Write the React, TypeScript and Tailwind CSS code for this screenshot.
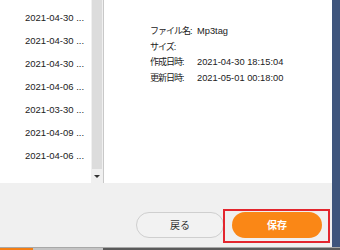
const dates = [
  '2021-04-30 ...',
  '2021-04-30 ...',
  '2021-04-30 ...',
  '2021-04-06 ...',
  '2021-03-30 ...',
  '2021-04-09 ...',
  '2021-04-06 ...',
]

const info: [string, string][] = [
  ['ファイル名:', 'Mp3tag'],
  ['サイズ:', ''],
  ['作成日時:', '2021-04-30 18:15:04'],
  ['更新日時:', '2021-05-01 00:18:00'],
]

const jp = { fontFamily: '"Liberation Sans", "Noto Sans CJK JP", sans-serif' }

export default function App() {
  return (
    <div className="flex h-[250px] w-[340px] flex-col overflow-hidden bg-[#3f557c]" style={jp}>
      <div className="flex h-[247px] w-[332px] flex-col bg-[#f0f0f0]">
        <div className="flex h-[183px]">
          <div className="w-[91px] bg-white pt-[7px]">
            {dates.map((d, i) => (
              <div key={i} className="flex h-[23px] items-center pl-[25px] text-[9.5px] text-[#222]">
                {d}
              </div>
            ))}
          </div>
          <div className="flex w-[12px] flex-col bg-[#f0f0f0]">
            <div className="mx-[1px] flex-1 bg-[#dcdcdc]" />
            <div className="flex h-[14px] items-center justify-center">
              <div className="h-0 w-0 border-x-[3px] border-t-[3px] border-x-transparent border-t-[#333]" />
            </div>
          </div>
          <div className="w-px bg-[#c8c8c8]" />
          <div className="flex-1 bg-white pl-[46px] pt-[24px]">
            {info.map(([k, v], i) => (
              <div key={i} className="flex h-[15.7px] items-center text-[#222]">
                <span className="w-[47px] text-[9px] tracking-[-1px]">{k}</span>
                <span className="text-[9.3px]">{v}</span>
              </div>
            ))}
          </div>
        </div>
        <div className="flex flex-1 items-end justify-end gap-[8px] pb-[9px] pr-[10px]">
          <button className="flex h-[26px] w-[88px] items-center justify-center rounded-full border border-[#cfcfcf] bg-[#f2f2f2] text-[10px] text-[#333]">
            戻る
          </button>
          <div className="relative">
            <button className="flex h-[26px] w-[90px] items-center justify-center rounded-full bg-[#fa8716] text-[10px] font-bold text-white">
              保存
            </button>
            <div className="absolute -left-[9px] -right-[8px] -top-[3px] -bottom-[5px] border-2 border-[#e3262e]" />
          </div>
        </div>
      </div>
      <div className="flex flex-1 flex-col">
        <div className="h-px bg-[#a8a8a8]" />
        <div className="flex flex-1">
          <div className="w-[33px] bg-[#f47e14]" />
          <div className="w-[70px] bg-[#c4c4c4]" />
          <div className="flex-1 bg-[#5a5a5a]" />
        </div>
      </div>
    </div>
  )
}
